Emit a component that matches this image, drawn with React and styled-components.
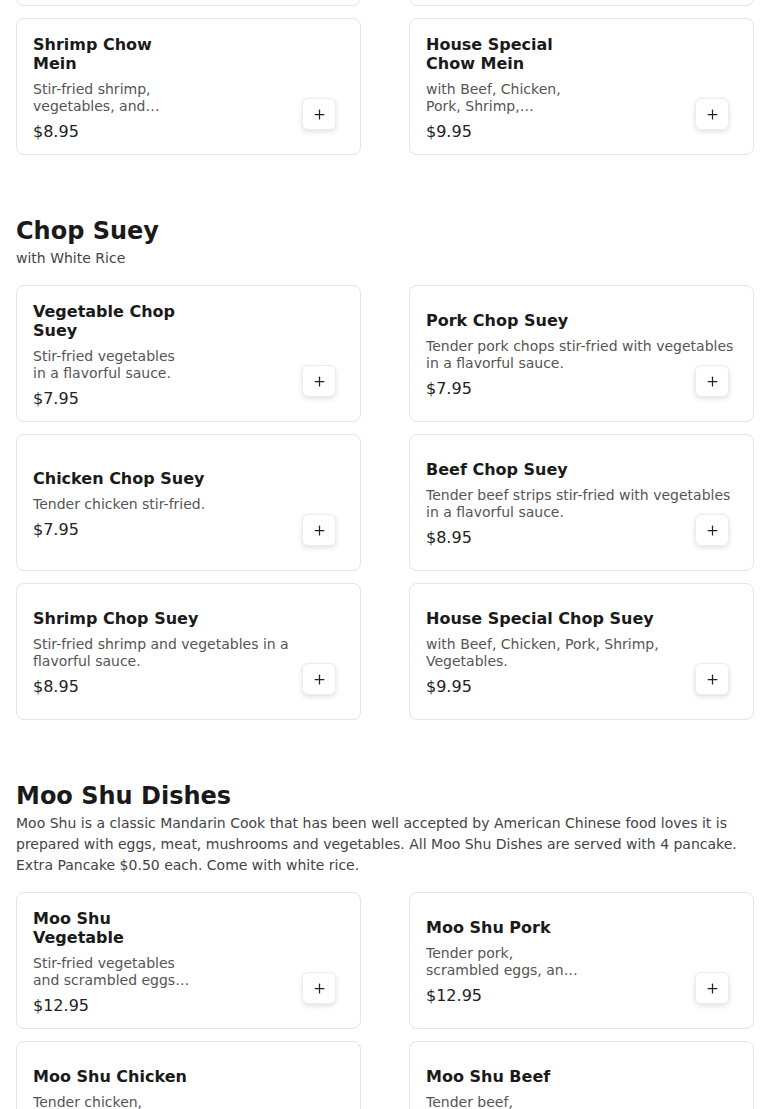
import React from 'react';
import styled, { createGlobalStyle } from 'styled-components';
import { Plus } from 'lucide-react';

const GlobalStyle = createGlobalStyle`
  html, body {
    margin: 0;
    padding: 0;
    background: #ffffff;
    font-family: "DejaVu Sans", Verdana, sans-serif;
    color: #1a1a1a;
    scrollbar-width: none;
  }
  ::-webkit-scrollbar { display: none; }
`;

const Page = styled.main`
  padding: 0 16px;
  margin-top: -131px;
  display: flex;
  flex-direction: column;
  gap: 60px;
`;

const Section = styled.section`
  display: flex;
  flex-direction: column;
`;

const SectionTitle = styled.h2`
  margin: 0 0 1px;
  font-size: 24px;
  line-height: 32px;
  font-weight: 700;
  color: #1a1a1a;
`;

const SectionNote = styled.p`
  margin: 0;
  font-size: 14px;
  line-height: 21px;
  color: #444;
`;

const Grid = styled.div`
  display: grid;
  grid-template-columns: 1fr 1fr;
  column-gap: 48px;
  row-gap: 12px;
  margin-top: ${p => (p.$flush ? '0' : '16px')};
`;

const Card = styled.article`
  position: relative;
  box-sizing: border-box;
  height: 137px;
  padding: 2px 16px 0;
  border: 1px solid #e4e4e4;
  border-radius: 8px;
  background: #fff;
  display: flex;
  flex-direction: column;
  justify-content: center;
`;

const Info = styled.div`
  display: flex;
  flex-direction: column;
  width: ${p => (p.$narrow ? '157px' : '100%')};
`;

const Name = styled.h3`
  margin: 0 0 8px;
  font-size: 16px;
  line-height: 19px;
  font-weight: 700;
  color: #1a1a1a;
`;

const Desc = styled.p`
  margin: 0;
  font-size: 14px;
  line-height: 17px;
  color: #555;
  display: -webkit-box;
  -webkit-line-clamp: 2;
  -webkit-box-orient: vertical;
  overflow: hidden;
`;

const Price = styled.span`
  margin-top: 7px;
  font-size: 16px;
  line-height: 19px;
  color: #222;
`;

const AddButton = styled.button`
  position: absolute;
  right: 24px;
  bottom: 24px;
  width: 34px;
  height: 32px;
  padding: 0;
  border: 1px solid #ececec;
  border-radius: 6px;
  background: #fff;
  color: #222;
  box-shadow: 0 2px 5px rgba(0, 0, 0, 0.12);
  display: flex;
  align-items: center;
  justify-content: center;
  cursor: pointer;
`;

const topRow = [
  { name: 'Beef Chow Mein', desc: 'Tender beef strips, vegetables, and noodles.', price: '$8.95', narrow: true },
  { name: 'Pork Chow Mein', desc: 'Tender pork, vegetables, and noodles.', price: '$7.95', narrow: true },
];

const chowMein = [
  { name: 'Shrimp Chow Mein', desc: 'Stir-fried shrimp, vegetables, and noodles in a savory sauce.', price: '$8.95', narrow: true },
  { name: 'House Special Chow Mein', desc: 'with Beef, Chicken, Pork, Shrimp, Vegetables and noodles.', price: '$9.95', narrow: true },
];

const chopSuey = [
  { name: 'Vegetable Chop Suey', desc: 'Stir-fried vegetables in a flavorful sauce.', price: '$7.95', narrow: true },
  { name: 'Pork Chop Suey', desc: 'Tender pork chops stir-fried with vegetables in a flavorful sauce.', price: '$7.95' },
  { name: 'Chicken Chop Suey', desc: 'Tender chicken stir-fried.', price: '$7.95' },
  { name: 'Beef Chop Suey', desc: 'Tender beef strips stir-fried with vegetables in a flavorful sauce.', price: '$8.95' },
  { name: 'Shrimp Chop Suey', desc: 'Stir-fried shrimp and vegetables in a flavorful sauce.', price: '$8.95' },
  { name: 'House Special Chop Suey', desc: 'with Beef, Chicken, Pork, Shrimp, Vegetables.', price: '$9.95' },
];

const mooShu = [
  { name: 'Moo Shu Vegetable', desc: 'Stir-fried vegetables and scrambled eggs wrapped in pancakes.', price: '$12.95', narrow: true },
  { name: 'Moo Shu Pork', desc: 'Tender pork, scrambled eggs, and vegetables with pancakes.', price: '$12.95', narrow: true },
  { name: 'Moo Shu Chicken', desc: 'Tender chicken, scrambled eggs, and vegetables with pancakes.', price: '$12.95', narrow: true },
  { name: 'Moo Shu Beef', desc: 'Tender beef, scrambled eggs, and vegetables with pancakes.', price: '$13.95', narrow: true },
];

const MenuCard = ({ item }) => (
  <Card>
    <Info $narrow={item.narrow}>
      <Name>{item.name}</Name>
      <Desc>{item.desc}</Desc>
      <Price>{item.price}</Price>
    </Info>
    <AddButton aria-label={`Add ${item.name}`}>
      <Plus size={15} strokeWidth={2} />
    </AddButton>
  </Card>
);

const CardGrid = ({ items, flush }) => (
  <Grid $flush={flush}>
    {items.map(item => (
      <MenuCard key={item.name} item={item} />
    ))}
  </Grid>
);

export default function App() {
  return (
    <>
      <GlobalStyle />
      <Page>
        <Section>
          <CardGrid items={[...topRow, ...chowMein]} flush />
        </Section>

        <Section>
          <SectionTitle>Chop Suey</SectionTitle>
          <SectionNote>with White Rice</SectionNote>
          <CardGrid items={chopSuey} />
        </Section>

        <Section>
          <SectionTitle>Moo Shu Dishes</SectionTitle>
          <SectionNote>
            Moo Shu is a classic Mandarin Cook that has been well accepted by American Chinese food loves it is
            prepared with eggs, meat, mushrooms and vegetables. All Moo Shu Dishes are served with 4 pancake.
            Extra Pancake $0.50 each. Come with white rice.
          </SectionNote>
          <CardGrid items={mooShu} />
        </Section>
      </Page>
    </>
  );
}
